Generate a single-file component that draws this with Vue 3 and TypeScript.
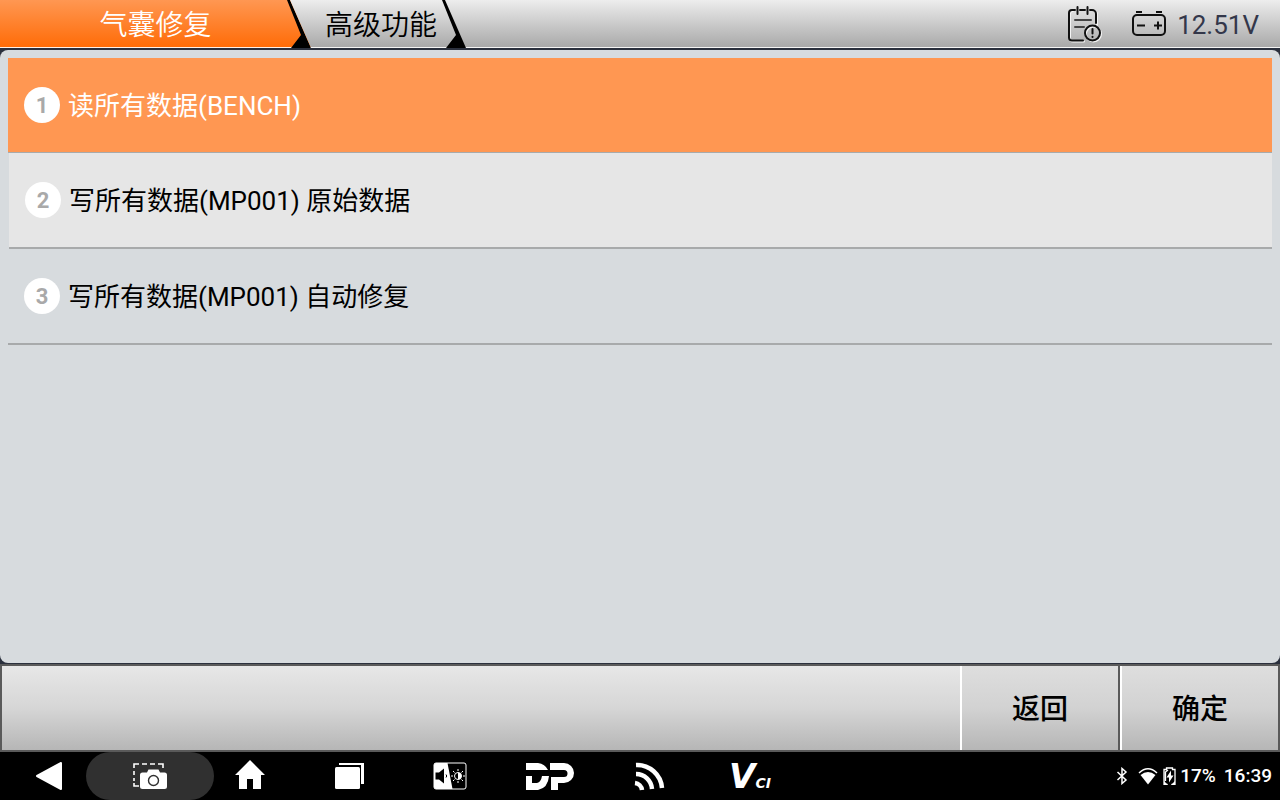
<script setup lang="ts">
import { ref } from 'vue'

interface Task {
  id: number
  label: string
}

const tasks: Task[] = [
  { id: 1, label: '读所有数据(BENCH)' },
  { id: 2, label: '写所有数据(MP001) 原始数据' },
  { id: 3, label: '写所有数据(MP001) 自动修复' },
]
const selected = ref(1)
</script>

<template>
  <div class="screen">
    <header class="topbar">
      <nav class="tabs">
        <button type="button" class="tab tab-active">
          <span>气囊修复</span>
          <svg class="edge" viewBox="0 0 24 48" aria-hidden="true"><path d="M0 0h3L24 48H4L14 35Z" /></svg>
        </button>
        <button type="button" class="tab tab-next">
          <span>高级功能</span>
          <svg class="edge" viewBox="0 0 24 48" aria-hidden="true"><path d="M0 0h3L24 48H4L14 35Z" /></svg>
        </button>
      </nav>
      <div class="tools">
        <button type="button" class="log" aria-label="日志">
          <svg width="36" height="40" viewBox="0 0 36 40" fill="none" stroke-linecap="round">
            <g stroke="#f4f4f4" stroke-width="2" transform="translate(1 1)">
              <path d="M17 36.5H6a3 3 0 0 1-3-3V9a3 3 0 0 1 3-3M30 8v12" />
              <circle cx="26.500" cy="29" r="7.500" />
            </g>
            <g stroke="#111" stroke-width="2">
              <path d="M17 36.500H6a3 3 0 0 1-3-3V9a3 3 0 0 1 3-3h3M14 6h5M24 6h2a4 4 0 0 1 4 4v9M11.500 3v7M21.500 3v7" />
              <path d="M9 16h16M9 23h9" stroke="#444" />
              <circle cx="26.500" cy="29" r="7.500" />
              <path d="M26.500 25v4.500M26.500 32.800v.2" />
            </g>
          </svg>
        </button>
        <div class="voltage">
          <svg width="36" height="26" viewBox="0 0 36 26" fill="none" stroke="#111" stroke-width="2">
            <rect x="2" y="4" width="32" height="20" rx="4" />
            <path d="M5 1h6M25 1h6M6 14.500h8M23 14.500h8M27 10.500v8" />
          </svg>
          <span>12.51V</span>
        </div>
      </div>
    </header>

    <main class="panel">
      <ol class="tasks">
        <li v-for="task in tasks" :key="task.id">
          <button
            type="button"
            class="task"
            :class="{ selected: task.id === selected, even: task.id % 2 === 0 }"
            @click="selected = task.id"
          >
            <span class="badge">{{ task.id }}</span>
            <span class="label">{{ task.label }}</span>
          </button>
        </li>
      </ol>
    </main>

    <footer class="actions">
      <button type="button" class="action">返回</button>
      <button type="button" class="action">确定</button>
    </footer>

    <div class="system">
      <nav class="keys">
        <button type="button" class="key" aria-label="后退">
          <svg viewBox="0 0 100 48"><path d="M37 24 61 11v26Z" fill="#fff" stroke="#fff" stroke-width="2" stroke-linejoin="round" /></svg>
        </button>
        <button type="button" class="key shot" aria-label="截屏">
          <svg viewBox="0 0 100 48">
            <path d="M34 16v-4h5M42 12h5M50 12h5M58 12h5v4M34 19v4M34 26v3M34 31v3h5" fill="none" stroke="#fff" stroke-width="1.600" />
            <path d="M42.500 20.500H47l1.500-3h10l1.500 3h4.500a2.500 2.500 0 0 1 2.500 2.500v11.500a2.500 2.500 0 0 1-2.500 2.500h-22a2.500 2.500 0 0 1-2.500-2.500V23a2.500 2.500 0 0 1 2.500-2.500Z" fill="#fff" />
            <circle cx="53.500" cy="28.500" r="5" fill="none" stroke="#303030" stroke-width="1.400" />
          </svg>
        </button>
        <button type="button" class="key" aria-label="主页">
          <svg viewBox="0 0 100 48"><path d="M50 8 65 23h-4v14h-8V27h-6v10h-8V23h-4Z" fill="#fff" /></svg>
        </button>
        <button type="button" class="key" aria-label="最近任务">
          <svg viewBox="0 0 100 48" fill="#fff">
            <rect x="35" y="15" width="25" height="22" rx="1.500" />
            <path d="M39 11h25v21h-3V13H39Z" />
          </svg>
        </button>
        <button type="button" class="key" aria-label="音量和亮度">
          <svg viewBox="0 0 100 48">
            <path d="M36 11h11.500L52.500 37H36a2 2 0 0 1-2-2V13a2 2 0 0 1 2-2Z" fill="#fff" />
            <rect x="34" y="11" width="32" height="26" rx="2" fill="none" stroke="#fff" stroke-width="1" />
            <path d="M35.500 20.500h3.500l5-4v15l-5-4h-3.500Z" />
            <path d="M46 22.500q1.500 1.500 0 3" fill="none" stroke="#000" />
            <circle cx="58" cy="24" r="3.500" fill="none" stroke="#fff" stroke-width="1" />
            <path d="M58 20.500a3.500 3.500 0 0 1 0 7Z" fill="#fff" />
            <path d="M58 17v2M58 29v2M51 24h2M63 24h2M53 19l1.500 1.500M61.500 27.500l1.500 1.500M53 29l1.500-1.500M61.500 20.500l1.500-1.500" stroke="#fff" stroke-width="1" />
          </svg>
        </button>
        <button type="button" class="key" aria-label="DP">
          <svg viewBox="0 0 100 48" fill="#fff">
            <path d="M26 11h12q7 1 10 7H26Z" />
            <path d="M26 24h6v7h5q4-1 5-7h7q-1 12-11 14H26Z" />
            <path d="M50 11h14a10 10 0 0 1 0 20h-6v7h-7V25h13a3.500 3.500 0 0 0 0-7H50Z" />
          </svg>
        </button>
        <button type="button" class="key" aria-label="无线投射">
          <svg viewBox="0 0 100 48" fill="none" stroke="#fff" stroke-width="4.500">
            <path d="M36 13a25 25 0 0 1 26 23M36 22a16 16 0 0 1 16 15M35 31a8 8 0 0 1 7 7" />
          </svg>
        </button>
        <button type="button" class="key vci"><span class="vci-big">V</span><span class="vci-small">CI</span></button>
      </nav>
      <div class="status">
        <svg width="12" height="18" viewBox="0 0 12 18" fill="none" stroke="#fff" stroke-width="1.500"><path d="m1.500 5 8.500 8-4 3.500v-15L10 5l-8.500 8" /></svg>
        <svg class="wifi" width="20" height="18" viewBox="0 0 20 18">
          <path d="M1 6Q10-2.500 19 6" fill="none" stroke="#fff" stroke-width="1.500" />
          <path d="M2.500 8q7.500-6 15 0L10 17.500Z" fill="#fff" />
        </svg>
        <svg width="13" height="18" viewBox="0 0 13 18" fill="#fff">
          <path d="M4.500 17.500H1v-15h2.500V1h6v1.500H12v15H8.500M5 3 2.500 5v9" fill="none" stroke="#fff" stroke-width="1.300" />
          <path d="M8 3.500 3.500 10.500H6V15.500l4.500-7H8Z" />
          <path d="M1 14l4 4H1ZM12 14l-4 4h4Z" />
        </svg>
        <span class="charge">17%</span>
        <time>16:39</time>
      </div>
    </div>
  </div>
</template>

<style>
body {
  margin: 0;
  background: #2b303d;
}
</style>

<style scoped>
.screen {
  display: flex;
  flex-direction: column;
  min-height: 100vh;
  background: #2b303d;
  color: #000;
  font-family: Roboto, "Noto Sans CJK SC", sans-serif;
}
button {
  margin: 0;
  padding: 0;
  border: 0;
  background: none;
  color: inherit;
  font: inherit;
  cursor: pointer;
}
svg {
  display: block;
}
.topbar {
  display: flex;
  justify-content: space-between;
  height: 48px;
  background: linear-gradient(#ededed, #a9a9a9 47px, #f4f4f4 47px);
}
.tabs {
  display: flex;
}
.tab {
  position: relative;
  height: 48px;
  font-size: 28px;
  line-height: 52px;
  font-weight: 350;
}
.tab-active {
  width: 311px;
  color: #fff;
  background: linear-gradient(#ff9752, #ff6c08 47px, #fff0e6 47px);
  clip-path: polygon(0 0, calc(100% - 21px) 0, 100% 100%, 0 100%);
}
.tab-next {
  width: 155px;
  padding-left: 14px;
  text-align: left;
}
.edge {
  position: absolute;
  top: 0;
  right: 0;
  width: 24px;
  height: 48px;
}
.tools {
  display: flex;
  align-items: center;
  gap: 29px;
  padding-right: 21px;
}
.voltage {
  display: flex;
  align-items: center;
  gap: 10px;
  color: #33374a;
  font-size: 26px;
  line-height: 50px;
}
.voltage span {
  padding-top: 2px;
}
.panel {
  flex: 1;
  margin: 2px 0 1px;
  padding: 8px;
  border-radius: 8px;
  background: #d7dbde;
}
.tasks {
  margin: 0;
  padding: 0;
  list-style: none;
}
.task {
  display: flex;
  align-items: center;
  gap: 8px;
  box-sizing: border-box;
  width: 100%;
  height: 96px;
  padding-left: 16px;
  border-bottom: 2px solid #a8aaab;
  font-size: 26px;
  text-align: left;
}
.label {
  padding-bottom: 4px;
}
.even {
  width: calc(100% - 1px);
  margin-left: 1px;
  background: #e6e6e6;
}
.selected {
  height: 95px;
  border-bottom-width: 1px;
  background: #ff9752;
  color: #fff;
}
.badge {
  width: 36px;
  height: 36px;
  border-radius: 50%;
  background: #fff;
  color: #a9a9a9;
  font-size: 22px;
  line-height: 38px;
  font-weight: 700;
  text-align: center;
}
.actions {
  display: flex;
  justify-content: flex-end;
  box-sizing: border-box;
  height: 88px;
  border: 2px solid #5a5a5a;
  border-right: 0;
  background: linear-gradient(#e7e7e7, #d6d6d6 50%, #b6b6b6);
}
.action {
  width: 160px;
  padding-bottom: 2px;
  border-left: 2px solid #fff;
  border-right: 2px solid #5a5a5a;
  background: linear-gradient(#dedede, #d2d2d2 50%, #b6b6b6);
  font-size: 28px;
  font-weight: 500;
}
.system {
  display: flex;
  justify-content: space-between;
  height: 48px;
  background: #000;
  color: #fff;
}
.keys {
  display: flex;
}
.key {
  position: relative;
  width: 100px;
  height: 48px;
}
.key svg {
  position: relative;
  width: 100px;
  height: 48px;
}
.shot::before {
  content: "";
  position: absolute;
  inset: 0 -14px;
  border-radius: 24px;
  background: #303030;
}
.vci {
  font-family: "DejaVu Sans", sans-serif;
  font-style: italic;
  font-weight: 700;
}
.vci-big {
  font-size: 34px;
  line-height: 48px;
}
.vci-small {
  font-size: 14px;
}
.status {
  display: flex;
  align-items: center;
  padding-right: 8px;
  font-size: 19px;
  line-height: 50px;
  font-weight: 500;
}
.wifi {
  margin: 0 5px 0 10px;
}
.charge {
  margin-left: 4px;
}
.status time {
  margin-left: 8px;
}
</style>
